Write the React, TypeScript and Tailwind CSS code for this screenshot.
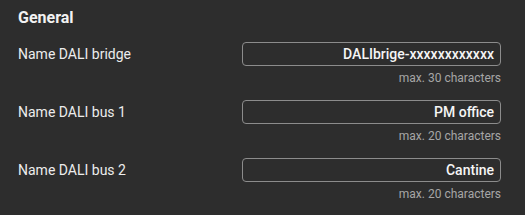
import React from "react";

const rows = [
  { label: "Name DALI bridge", value: "DALIbrige-xxxxxxxxxxxx", hint: "max. 30 characters" },
  { label: "Name DALI bus 1", value: "PM office", hint: "max. 20 characters" },
  { label: "Name DALI bus 2", value: "Cantine", hint: "max. 20 characters" },
];

export default function App() {
  return (
    <div
      className="w-[525px] h-[215px] bg-[#2d2d2d] text-white pl-[18px] pr-[24px] pt-[6px]"
      style={{ fontFamily: "Roboto, 'Noto Sans', sans-serif" }}
    >
      <div className="text-[16px] font-bold leading-[24px] text-[#f2f2f2]">General</div>
      <div className="flex flex-col mt-[12px] gap-[10px]">
        {rows.map((r) => (
          <div key={r.label} className="flex flex-col">
            <div className="flex items-center justify-between h-[24px]">
              <span className="text-[14px] text-[#ececec]">{r.label}</span>
              <div className="w-[259px] h-[24px] border border-[#8c8c8c] rounded-[4px] flex items-center justify-end pr-[6px]">
                <span className="text-[14px] font-medium text-[#f5f5f5]">{r.value}</span>
              </div>
            </div>
            <div className="text-right text-[12px] leading-[24px] text-[#a6a6a6]">{r.hint}</div>
          </div>
        ))}
      </div>
    </div>
  );
}
